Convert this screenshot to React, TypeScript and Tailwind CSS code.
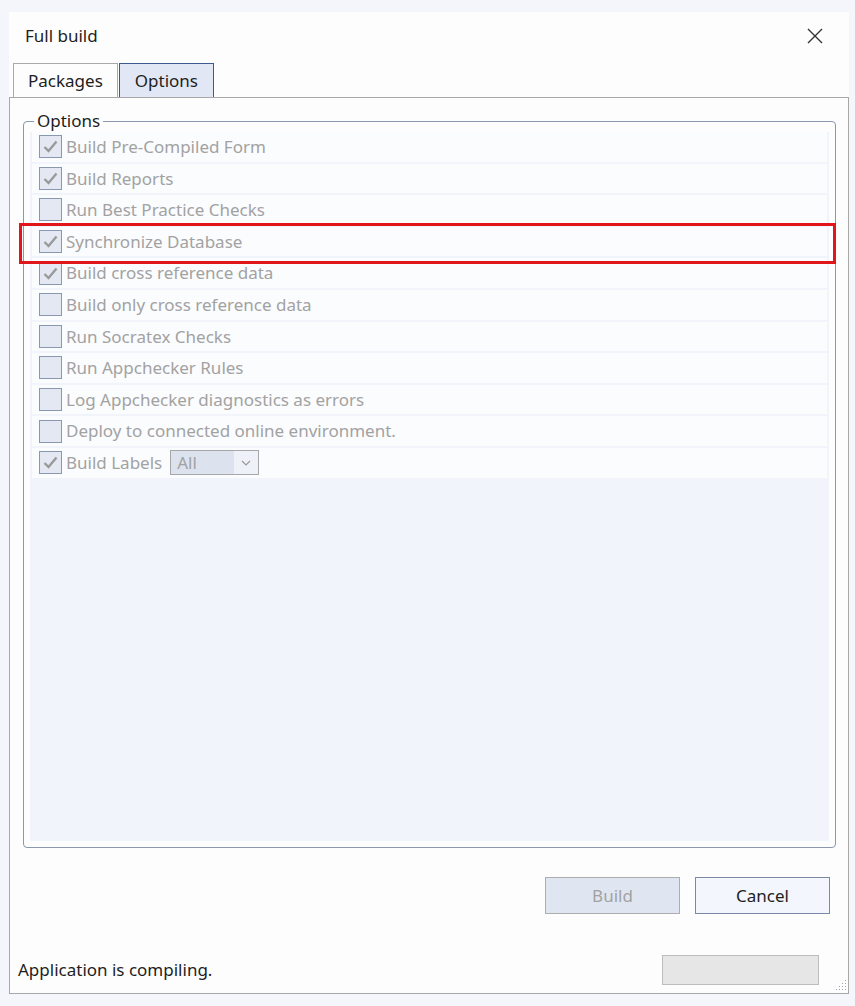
import { useState } from 'react';

const options = [
  { label: 'Build Pre-Compiled Form', checked: true },
  { label: 'Build Reports', checked: true },
  { label: 'Run Best Practice Checks', checked: false },
  { label: 'Synchronize Database', checked: true, highlight: true },
  { label: 'Build cross reference data', checked: true },
  { label: 'Build only cross reference data', checked: false },
  { label: 'Run Socratex Checks', checked: false },
  { label: 'Run Appchecker Rules', checked: false },
  { label: 'Log Appchecker diagnostics as errors', checked: false },
  { label: 'Deploy to connected online environment.', checked: false },
];

function CheckBox({ checked }: { checked: boolean }) {
  return (
    <span className="w-[23px] h-[23px] shrink-0 border border-[#8a97b0] bg-[#e3e8f2] flex items-center justify-center">
      {checked && (
        <svg width="15" height="13" viewBox="0 0 15 13" fill="none" aria-hidden="true">
          <path d="M1.5 7l4 4L13.5 1.5" stroke="#9a9a9a" strokeWidth="2.4" />
        </svg>
      )}
    </span>
  );
}

function Row({ children, highlight }: { children: React.ReactNode; highlight?: boolean }) {
  return (
    <div className="relative h-[29.6px] mb-[2px] bg-[#fbfcfe] flex items-center gap-[4px] pl-[7px]">
      {children}
      {highlight && (
        <div className="absolute z-10 left-[-13px] right-[-9px] top-[-4px] bottom-[-8px] border-[3px] border-[#e0161b] pointer-events-none" />
      )}
    </div>
  );
}

export default function App() {
  const [tab, setTab] = useState('Options');

  return (
    <div
      className="w-[855px] h-[1006px] bg-[#f4f6fc] pt-[12px] pl-[9px] text-[17px] text-[#1e1e1e]"
      style={{ fontFamily: '"Noto Sans", "Open Sans", sans-serif' }}
    >
      <div className="w-[840px] h-[982px] bg-[#fdfdfd] flex flex-col">
        {/* title */}
        <div className="h-[51px] flex items-center justify-between pl-[16px] pr-[26px] pb-[3px]">
          <span>Full build</span>
          <svg width="16" height="16" viewBox="0 0 16 16" aria-hidden="true">
            <path d="M1 1l14 14M15 1L1 15" stroke="#333" strokeWidth="1.4" />
          </svg>
        </div>

        {/* tabs */}
        <div className="h-[34px] flex items-end pl-[4px] gap-[1px]">
          {['Packages', 'Options'].map(t => (
            <button
              key={t}
              onClick={() => setTab(t)}
              className={
                t === tab
                  ? 'h-[34px] px-[15px] bg-[#e1e7f4] border border-b-0 border-[#3b5a92] text-[#1e1e1e]'
                  : 'h-[34px] px-[14px] bg-[#fdfdfd] border border-b-0 border-[#a9a9a9] text-[#1e1e1e]'
              }
            >
              {t}
            </button>
          ))}
        </div>

        {/* panel */}
        <div className="flex-1 border border-[#a8a8a8] flex flex-col relative">
          <fieldset className="mt-[12px] ml-[13px] mr-[12px] border border-[#8b97ad] rounded-[4px] px-[6px] pb-[6px]">
            <legend className="px-[3px] ml-[4px] leading-[22px] text-[#1e1e1e]">Options</legend>
            <div className="h-[709px] bg-[#f1f4fb] px-[2px]">
              {options.map(o => (
                <Row key={o.label} highlight={o.highlight}>
                  <CheckBox checked={o.checked} />
                  <span className="text-[#a2a2a2] whitespace-nowrap">{o.label}</span>
                </Row>
              ))}
              <Row>
                <CheckBox checked />
                <span className="text-[#a2a2a2] whitespace-nowrap">Build Labels</span>
                <div className="ml-[4px] w-[89px] h-[25px] border border-[#a7a7a7] flex">
                  <div className="w-[63px] bg-[#dce3ef] text-[#a2a2a2] pl-[6px] leading-[23px]">All</div>
                  <div className="flex-1 bg-[#eef1f8] flex items-center justify-center">
                    <svg width="10" height="6" viewBox="0 0 10 6" aria-hidden="true">
                      <path d="M1 1l4 4 4-4" stroke="#9a9a9a" strokeWidth="1.2" fill="none" />
                    </svg>
                  </div>
                </div>
              </Row>
            </div>
          </fieldset>

          {/* buttons */}
          <div className="mt-[29px] flex justify-end gap-[15px] pr-[18px]">
            <button className="w-[135px] h-[37px] bg-[#e0e6f1] border border-[#adadad] text-[#a2a2a2]">Build</button>
            <button className="w-[135px] h-[37px] bg-[#f3f6fd] border border-[#7a89a5] text-[#1e1e1e]">Cancel</button>
          </div>

          {/* status */}
          <div className="mt-auto mb-[8px] flex items-center justify-between pl-[8px] pr-[29px]">
            <span>Application is compiling.</span>
            <div className="w-[157px] h-[30px] bg-[#e6e6e6] border border-[#bdbdbd]" />
          </div>

          <svg className="absolute right-[1px] bottom-[1px]" width="14" height="14" viewBox="0 0 14 14" aria-hidden="true">
            {[
              [12, 2], [12, 5], [12, 8], [12, 11], [9, 5], [9, 8], [9, 11], [6, 8], [6, 11], [3, 11],
            ].map(([x, y]) => (
              <rect key={`${x}-${y}`} x={x} y={y} width="1" height="1" fill="#9aa4b5" />
            ))}
          </svg>
        </div>
      </div>
    </div>
  );
}
